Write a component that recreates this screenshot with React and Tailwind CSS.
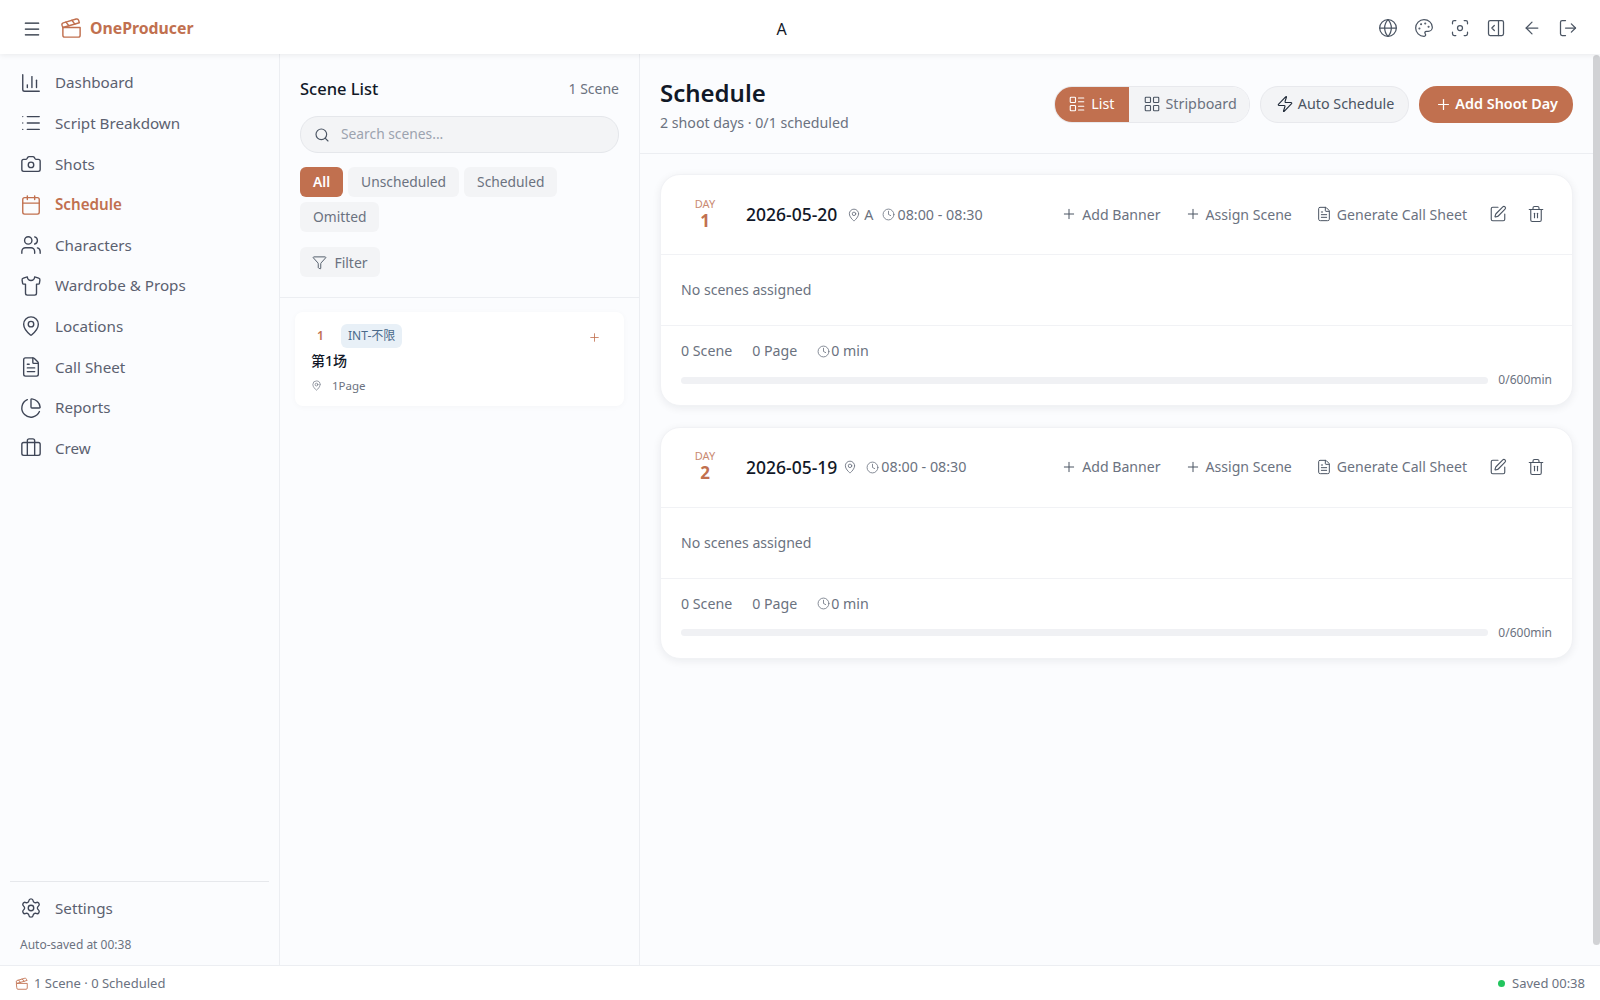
import {
    Menu, Clapperboard, ChartColumn, List, Camera, Calendar, Users, Shirt, MapPin, FileText, ChartPie,
    Briefcase, Settings, Globe, Palette, Focus, PanelRightOpen, ArrowLeft, LogOut, LayoutList, LayoutGrid,
    Zap, Plus, Funnel, Search, SquarePen, Trash2, Clock,
} from 'lucide-react'

const navItems = [
    { label: 'Dashboard', icon: ChartColumn },
    { label: 'Script Breakdown', icon: List },
    { label: 'Shots', icon: Camera },
    { label: 'Schedule', icon: Calendar, active: true },
    { label: 'Characters', icon: Users },
    { label: 'Wardrobe & Props', icon: Shirt },
    { label: 'Locations', icon: MapPin },
    { label: 'Call Sheet', icon: FileText },
    { label: 'Reports', icon: ChartPie },
    { label: 'Crew', icon: Briefcase },
]

const headerIcons = [Globe, Palette, Focus, PanelRightOpen, ArrowLeft, LogOut]

function Header() {
    return (
        <header className="relative z-10 h-[54px] shrink-0 bg-white flex items-center pt-[3px] shadow-[0_1px_6px_rgba(0,0,0,0.08)]">
            <div className="w-[400px] flex items-center pl-[22px]">
                <Menu size={20} strokeWidth={1.5} className="text-[#1f2937]" />
                <Clapperboard size={23} strokeWidth={1.5} className="ml-[18px] text-[#c1704f]" />
                <span className="ml-[7px] text-[15.8px] font-bold text-[#c1704f]">OneProducer</span>
            </div>
            <div className="flex-1 text-center text-base text-[#111827] pr-[37px]">A</div>
            <div className="w-[400px] flex items-center justify-end gap-[16px] pr-[22px] pb-[2px]">
                {headerIcons.map((Icon, i) => <Icon key={i} size={20} strokeWidth={1.5} className="text-[#4b5563]" />)}
            </div>
        </header>
    )
}

function Sidebar() {
    return (
        <aside className="w-[280px] shrink-0 bg-[#fbfcfe] border-r border-[#eceef2] flex flex-col pt-[8.5px]">
            <nav className="flex flex-col">
                {navItems.map(item => {
                    const Icon = item.icon
                    return (
                        <div key={item.label} className={`h-[40.6px] pl-[20px] flex items-center gap-[13px] text-[15.2px] ${item.active ? 'text-[#c1704f] font-semibold' : 'text-[#5b6170]'}`}>
                            <Icon size={22} strokeWidth={1.5} className={item.active ? 'text-[#c1704f]' : 'text-[#3f4657]'} />
                            <span>{item.label}</span>
                        </div>
                    )
                })}
            </nav>
            <div className="mt-auto mx-[10px] border-t border-[#e6e8ec] pt-[6px] pb-[12px]">
                <div className="h-[40px] pl-[10px] flex items-center gap-[13px] text-[15.2px] text-[#5b6170]">
                    <Settings size={22} strokeWidth={1.5} className="text-[#3f4657]" />
                    <span>Settings</span>
                </div>
                <div className="pl-[10px] mt-[9px] text-xs leading-[16px] text-[#6b7280]">Auto-saved at 00:38</div>
            </div>
        </aside>
    )
}

function Chip({ children, active }) {
    return (
        <span className={`h-[30px] px-[13px] rounded-md flex items-center text-[13.8px] ${active ? 'bg-[#c1704f] text-white font-semibold' : 'bg-[#f3f4f6] text-[#6b7280]'}`}>
            {children}
        </span>
    )
}

function ScenePanel() {
    return (
        <section className="w-[360px] shrink-0 bg-[#fbfcfe] border-r border-[#eceef2] flex flex-col">
            <div className="px-[20px] pt-[22px] pb-[20px] border-b border-[#eceef2]">
                <div className="flex items-center justify-between h-[26px]">
                    <span className="text-[16.5px] font-medium text-[#111827]">Scene List</span>
                    <span className="text-[14px] text-[#6b7280] pb-[2px]">1 Scene</span>
                </div>
                <div className="mt-[14px] h-[37px] rounded-[18px] bg-[#f3f4f6] border border-[#e5e7eb] flex items-center pl-[13px] gap-[11px]">
                    <Search size={16} strokeWidth={1.75} className="text-[#4b5563]" />
                    <span className="text-[13.8px] text-[#9ca3af]">Search scenes...</span>
                </div>
                <div className="mt-[14px] flex flex-wrap gap-[5px]">
                    <Chip active>All</Chip>
                    <Chip>Unscheduled</Chip>
                    <Chip>Scheduled</Chip>
                    <Chip>Omitted</Chip>
                </div>
                <div className="mt-[15px] flex">
                    <span className="h-[30px] w-[80px] rounded-md bg-[#f3f4f6] text-[#6b7280] text-[14px] flex items-center justify-center gap-[7px]">
                        <Funnel size={15} strokeWidth={1.5} className="text-[#4b5563]" />
                        Filter
                    </span>
                </div>
            </div>
            <div className="px-[15px] pt-[14px]">
                <div className="relative h-[94px] bg-white rounded-lg shadow-[0_1px_6px_rgba(17,24,39,0.03)] pl-[16px] pt-[12px]">
                    <div className="flex items-center">
                        <span className="w-[30px] pl-[6px] text-xs font-semibold text-[#c1704f]">1</span>
                        <span className="h-[24px] px-[7px] rounded-md bg-[#e8f0f7] text-xs text-[#4a6a8a] flex items-center">INT-不限</span>
                    </div>
                    <div className="mt-[2px] text-[14px] font-medium leading-[22px] text-[#111827]">第1场</div>
                    <div className="mt-[5px] flex items-center text-[11.5px] text-[#6b7280] gap-[10px]">
                        <MapPin size={11} strokeWidth={1.5} />
                        <span>1Page</span>
                    </div>
                    <Plus size={13} strokeWidth={1.5} className="absolute right-[23px] top-[19px] text-[#c1704f]" />
                </div>
            </div>
        </section>
    )
}

function ActionButton({ icon: Icon, label }) {
    return (
        <span className="flex items-center gap-[5px] text-[14.1px] text-[#6b7280]">
            <Icon size={16} strokeWidth={1.5} className="text-[#4b5563]" />
            {label}
        </span>
    )
}

function DayCard({ day, date, location, locationClass }) {
    return (
        <div className="bg-white rounded-[20px] border border-[#f1f2f5] shadow-[0_2px_8px_rgba(17,24,39,0.07)]">
            <div className="h-[80px] flex items-center pl-[20px] pr-[27px] border-b border-[#f1f2f5]">
                <div className="w-[48px] flex flex-col items-center leading-none pb-[2px]">
                    <span className="text-[11px] leading-[14px] text-[#c98a72]">DAY</span>
                    <span className="text-[17px] leading-[20px] font-bold text-[#c1704f]">{day}</span>
                </div>
                <span className="ml-[17px] text-[17.5px] font-medium text-[#111827]">{date}</span>
                <span className={`flex items-center gap-[3px] text-[14.3px] text-[#6b7280] ${locationClass}`}>
                    <MapPin size={14} strokeWidth={1.5} />
                    {location}
                </span>
                <span className="flex items-center gap-[2px] text-[14.3px] text-[#6b7280]">
                    <Clock size={13} strokeWidth={1.5} />
                    08:00 - 08:30
                </span>
                <div className="ml-auto flex items-center">
                    <ActionButton icon={Plus} label="Add Banner" />
                    <span className="w-[24px]" />
                    <ActionButton icon={Plus} label="Assign Scene" />
                    <span className="w-[24px]" />
                    <ActionButton icon={FileText} label="Generate Call Sheet" />
                    <span className="w-[22px]" />
                    <SquarePen size={18} strokeWidth={1.5} className="text-[#4b5563]" />
                    <span className="w-[20px]" />
                    <Trash2 size={18} strokeWidth={1.5} className="text-[#4b5563]" />
                </div>
            </div>
            <div className="h-[71px] flex items-center px-[20px] text-[14.1px] text-[#6b7280] border-b border-[#f1f2f5]">No scenes assigned</div>
            <div className="h-[79px] px-[20px] pt-[15px]">
                <div className="flex items-center text-[14.2px] leading-[20px] text-[#6b7280]">
                    <span>0 Scene</span>
                    <span className="ml-[20px]">0 Page</span>
                    <span className="ml-[20px] flex items-center gap-[1px]"><Clock size={13} strokeWidth={1.5} />0 min</span>
                </div>
                <div className="mt-[11px] flex items-center gap-[10px]">
                    <div className="flex-1 h-[7px] rounded-full bg-[#f0f1f4]" />
                    <span className="text-xs text-[#6b7280]">0/600min</span>
                </div>
            </div>
        </div>
    )
}

function SchedulePanel() {
    return (
        <main className="flex-1 bg-[#fbfcfe] flex min-w-0">
            <div className="flex-1 min-w-0 flex flex-col">
                <div className="h-[100px] shrink-0 flex items-center justify-between pl-[20px] pr-[20px] border-b border-[#eceef2]">
                    <div className="pt-[2px]">
                        <div className="text-[24px] leading-[32px] font-semibold text-[#111827]">Schedule</div>
                        <div className="mt-[4px] text-[14.2px] leading-[20px] text-[#6b7280]">2 shoot days · 0/1 scheduled</div>
                    </div>
                    <div className="flex items-center gap-[10px] pt-[1px]">
                        <div className="h-[37px] flex rounded-[18px] overflow-hidden border border-[#e8e9ed] text-[14.3px]">
                            <span className="bg-[#c1704f] text-white flex items-center gap-[5px] pl-[13px] pr-[14px]"><LayoutList size={18} strokeWidth={1.5} />List</span>
                            <span className="bg-[#f3f4f6] text-[#6b7280] flex items-center gap-[5px] pl-[14px] pr-[12px]"><LayoutGrid size={18} strokeWidth={1.5} className="text-[#4b5563]" />Stripboard</span>
                        </div>
                        <span className="h-[37px] rounded-[18px] bg-[#f3f4f6] border border-[#e8e9ed] pl-[15px] pr-[14px] flex items-center gap-[4px] text-[14.3px] text-[#4b5563]"><Zap size={18} strokeWidth={1.5} className="text-[#1f2937]" />Auto Schedule</span>
                        <span className="h-[37px] rounded-[18px] bg-[#c1704f] pl-[16px] pr-[15px] flex items-center gap-[3px] text-[14.4px] font-semibold text-white"><Plus size={17} strokeWidth={1.75} />Add Shoot Day</span>
                    </div>
                </div>
                <div className="px-[20px] pt-[20px] flex flex-col gap-[20.5px]">
                    <DayCard day="1" date="2026-05-20" location="A" locationClass="ml-[10px] mr-[9px]" />
                    <DayCard day="2" date="2026-05-19" location="" locationClass="ml-[6px] mr-[9px]" />
                </div>
            </div>
            <div className="w-[7px] shrink-0 pt-[1px]">
                <div className="h-[890px] rounded-full bg-[#d1d2d5]" />
            </div>
        </main>
    )
}

function StatusBar() {
    return (
        <footer className="h-[35px] shrink-0 bg-white border-t border-[#eceef2] flex items-center justify-between pl-[15px] pr-[15px] pt-[1px] text-[13px] text-[#6b7280]">
            <span className="flex items-center gap-[5px]"><Clapperboard size={14} strokeWidth={1.5} className="text-[#c1704f]" />1 Scene · 0 Scheduled</span>
            <span className="flex items-center gap-[7px]"><span className="w-[7px] h-[7px] rounded-full bg-[#22c55e]" />Saved 00:38</span>
        </footer>
    )
}

export default function App() {
    return (
        <div className="h-screen w-full overflow-hidden flex flex-col bg-[#fbfcfe]" style={{ fontFamily: '"Noto Sans", "Noto Sans CJK SC", sans-serif' }}>
            <Header />
            <div className="flex-1 min-h-0 flex">
                <Sidebar />
                <ScenePanel />
                <SchedulePanel />
            </div>
            <StatusBar />
        </div>
    )
}
